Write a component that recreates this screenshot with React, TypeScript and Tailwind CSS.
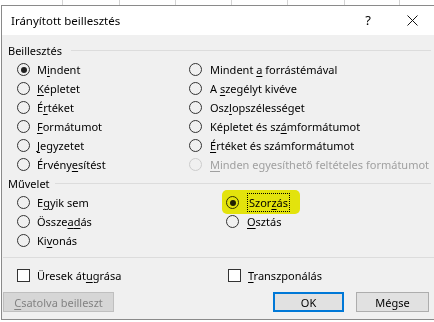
import React from "react";

type OptionProps = {
  label: React.ReactNode;
  checked?: boolean;
  disabled?: boolean;
  gap?: string;
};

function Radio({ checked, disabled }: { checked?: boolean; disabled?: boolean }) {
  return (
    <span
      className={`flex h-[13px] w-[13px] shrink-0 items-center justify-center rounded-full border ${
        disabled ? "border-[#cccccc]" : "border-[#333333]"
      }`}
    >
      {checked ? <span className="h-[6px] w-[6px] rounded-full bg-[#222222]" /> : null}
    </span>
  );
}

function Option({ label, checked, disabled, gap = "gap-[7px]" }: OptionProps) {
  return (
    <div className={`flex h-[19px] items-center whitespace-nowrap ${gap}`}>
      <Radio checked={checked} disabled={disabled} />
      <span className={disabled ? "text-[#a0a0a0]" : "text-black"}>{label}</span>
    </div>
  );
}

function Check({ label }: { label: React.ReactNode }) {
  return (
    <div className="flex h-[19px] items-center gap-[7px] whitespace-nowrap">
      <span className="h-[13px] w-[13px] shrink-0 border border-[#333333] bg-white" />
      <span>{label}</span>
    </div>
  );
}

function Section({ title, gap }: { title: string; gap: string }) {
  return (
    <div className={`flex h-[19px] items-center pl-[6px] pr-[4px] ${gap}`}>
      <span>{title}</span>
      <span className="h-px flex-1 bg-[#dcdcdc]" />
    </div>
  );
}

const u = (s: string) => <u className="underline-offset-2">{s}</u>;

export default function App() {
  return (
    <div
      className="relative h-[322px] w-[434px] overflow-hidden bg-white text-[11px] leading-none text-black"
      style={{ fontFamily: '"Noto Sans", "Open Sans", sans-serif' }}
    >
      {/* worksheet grid behind the dialog */}
      <div className="flex h-[5px]">
        <span className="w-[63px] shrink-0 border-r border-[#d4d4d4]" />
        <span className="w-[57px] shrink-0 border-r border-[#d4d4d4]" />
        <span className="w-[56px] shrink-0 border-r border-[#d4d4d4]" />
        <span className="w-[56px] shrink-0 border-r border-[#d4d4d4]" />
        <span className="w-[56px] shrink-0 border-r border-[#d4d4d4]" />
        <span className="w-[57px] shrink-0 border-r border-[#d4d4d4]" />
        <span className="w-[55px] shrink-0 border-r border-[#d4d4d4]" />
      </div>

      <div className="ml-[1px] w-[440px] border-y border-l border-[#8a8a8a] bg-[#f0f0f0]">
        <div className="flex h-[29px] items-center bg-white pl-[9px] pr-[23px]">
          <span className="flex-1 text-[11.5px]">Irányított beillesztés</span>
          <span className="text-[13px]">?</span>
          <svg viewBox="0 0 11 11" className="ml-[36px] h-[11px] w-[11px]" aria-hidden="true">
            <path d="M0.5 0.5 L10.5 10.5 M10.5 0.5 L0.5 10.5" stroke="#111" strokeWidth="1" fill="none" />
          </svg>
        </div>

        <div className="pr-[6px] pt-[6px]">
          <Section title="Beillesztés" gap="gap-[9px]" />
          <div className="flex pl-[15px]">
            <div className="flex w-[172px] flex-col">
              <Option checked label={<>M{u("i")}ndent</>} />
              <Option label={<>{u("K")}épletet</>} />
              <Option label={<>É{u("r")}téket</>} />
              <Option label={<>{u("F")}ormátumot</>} />
              <Option label={<>{u("J")}egyzetet</>} />
              <Option label={<>Érvény{u("e")}sítést</>} />
            </div>
            <div className="flex flex-col">
              <Option gap="gap-[8px]" label={<>Mindent {u("a")} forrástémával</>} />
              <Option gap="gap-[8px]" label={<>A {u("s")}zegélyt kivéve</>} />
              <Option gap="gap-[8px]" label={<>Osz{u("l")}opszélességet</>} />
              <Option gap="gap-[8px]" label={<>Képletet és sz{u("á")}mformátumot</>} />
              <Option gap="gap-[8px]" label={<>{u("É")}rtéket és számformátumot</>} />
              <Option gap="gap-[8px]" disabled label={<>{u("M")}inden egyesíthető feltételes formátumot</>} />
            </div>
          </div>

          <Section title="Művelet" gap="gap-[5px]" />
          <div className="flex pl-[15px]">
            <div className="flex w-[209px] flex-col">
              <Option label={<>E{u("g")}yik sem</>} />
              <Option label={<>Össze{u("a")}{u("d")}ás</>} />
              <Option label={<>Ki{u("v")}onás</>} />
            </div>
            <div className="flex flex-col">
              <div className="relative">
                <Option
                  checked
                  gap="gap-[8px]"
                  label={
                    <span className="border border-dotted border-black px-[1px] py-[1px]">
                      Szor{u("z")}ás
                    </span>
                  }
                />
                <span className="pointer-events-none absolute left-[-4px] top-[-3px] h-[24px] w-[78px] rounded-[5px] bg-[#f2f20c] mix-blend-multiply" />
              </div>
              <Option gap="gap-[8px]" label={<>{u("O")}sztás</>} />
            </div>
          </div>
        </div>

        <div className="ml-px mr-[4px] mt-[7px] h-px bg-[#dcdcdc]" />

        <div className="mt-[8px] flex pl-[15px]">
          <div className="w-[211px]">
            <Check label={<>Üresek át{u("u")}grása</>} />
          </div>
          <Check label={<>{u("T")}ranszponálás</>} />
        </div>

        <div className="mt-[7px] flex h-[20px] items-stretch pl-[1px]">
          <button className="w-[111px] border border-[#bfbfbf] bg-[#d6d6d6] text-[#838383]">
            {u("C")}satolva beilleszt
          </button>
          <span className="flex-1" />
          <button className="w-[71px] border-2 border-[#0078d7] bg-[#e1e1e1]">OK</button>
          <button className="ml-[12px] mr-[12px] w-[73px] border border-[#adadad] bg-[#e1e1e1]">Mégse</button>
        </div>
        <div className="h-[7px]" />
      </div>
    </div>
  );
}
